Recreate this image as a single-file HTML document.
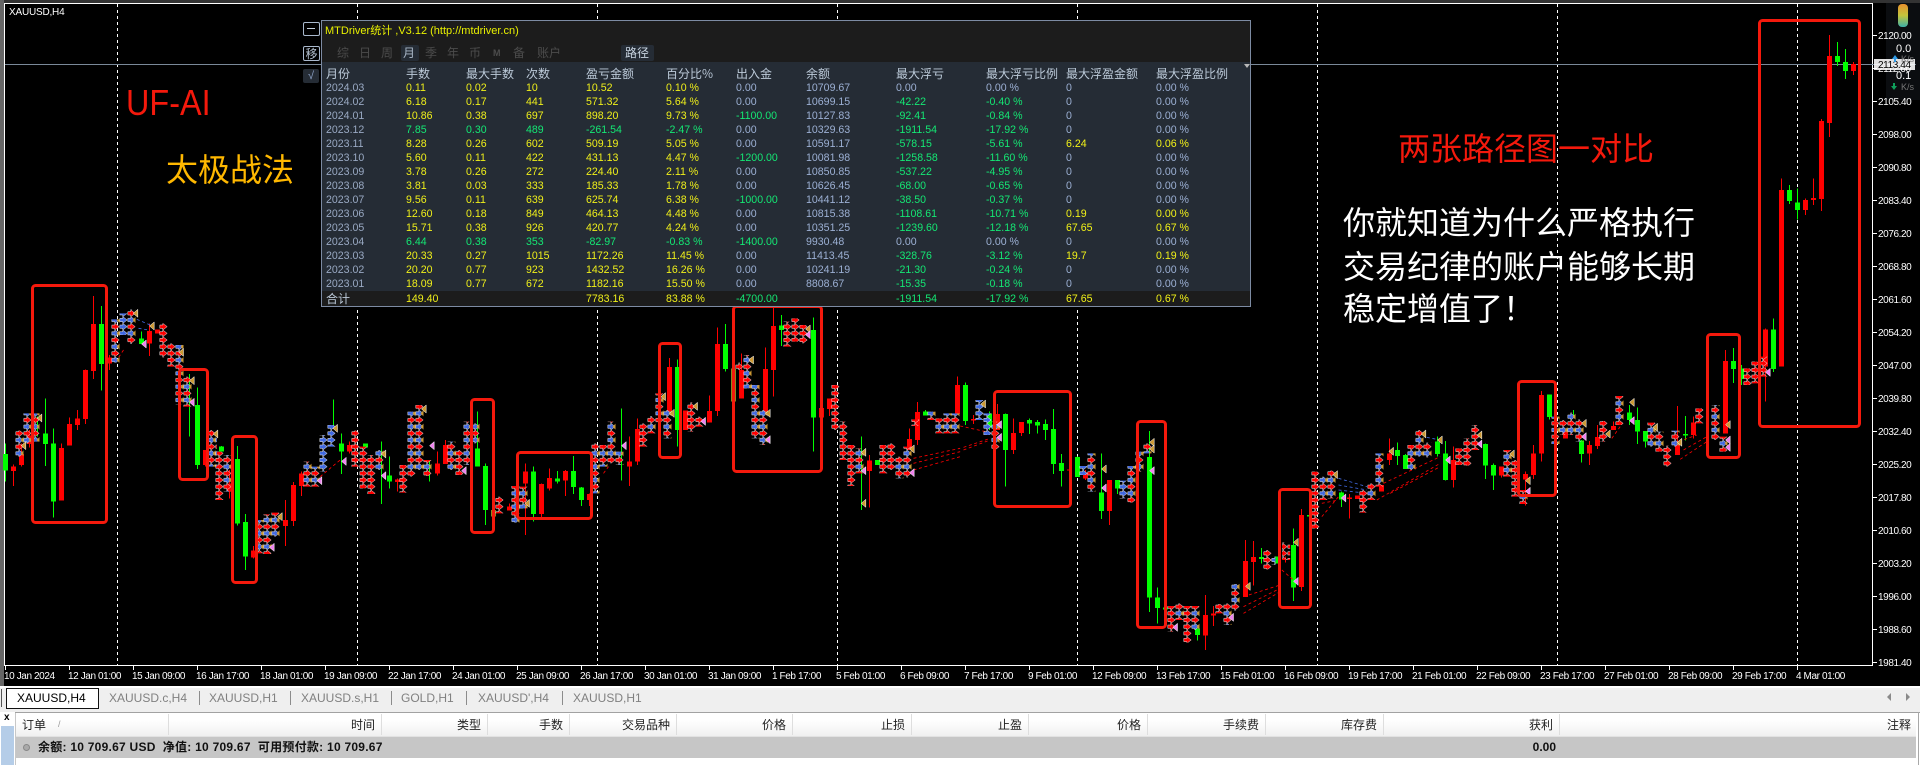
<!DOCTYPE html>
<html><head><meta charset="utf-8"><title>XAUUSD,H4</title>
<style>
html,body{margin:0;padding:0;width:1920px;height:765px;overflow:hidden;background:#000}
body{position:relative;font-family:"Liberation Sans","WenQuanYi Zen Hei","Noto Sans CJK SC",sans-serif}
.a{position:absolute;white-space:nowrap}
svg text{font-family:"Liberation Sans",sans-serif;font-size:10px;letter-spacing:-.4px;fill:#fff}
.w,.b{fill:none;shape-rendering:crispEdges}
.w{stroke-width:3}.b{stroke-width:15}
.r{stroke:#f00}.g{stroke:#0f0}
.s{fill:none;stroke-width:24}
.t1{fill:#cd9933;stroke:#fff;stroke-width:1.5}
.t2{fill:#ee82ee;stroke:#fff;stroke-width:1.5}
.d{fill:none;stroke-width:2.5;stroke-dasharray:9 8}
#p{position:absolute;left:321px;top:20px;width:928px;height:285px;border:1px solid #7d8ba3;background:#252c35;box-sizing:content-box}
#p .tb{position:absolute;left:0;top:0;width:100%;height:41px;background:#1c1c1c}
#p .ft{position:absolute;left:0;top:270px;width:100%;height:15px;background:#1c1c1c}
.h{position:absolute;top:47px;transform:translateY(-14px);font:12px/14px "WenQuanYi Zen Hei","Noto Sans CJK SC",sans-serif;color:#4c4c4c}
table{position:absolute;left:326px;top:67px;border-collapse:collapse;table-layout:fixed;width:920px;font:10.6px/14px "Liberation Sans",sans-serif;color:#9cb0d4}
td,th{padding:0;height:14px;white-space:nowrap;text-align:left;font-weight:normal}
th{font:12px/14px "WenQuanYi Zen Hei","Noto Sans CJK SC",sans-serif;color:#bccad9}
tr td:nth-child(n+2):nth-child(-n+6){color:#efef1a}
tr.gr td:nth-child(n+2):nth-child(-n+6){color:#14e874}
tr td:nth-child(1){color:#99a9c3}
tr td:nth-child(9),tr td:nth-child(10),td.gn{color:#14e874}
td.ne,tr td.ne{color:#9cb0d4}
td.ye,tr td.ye{color:#f2f218}
tr.tot td{height:16px}
tr.tot td:nth-child(1){font:12px/14px "WenQuanYi Zen Hei","Noto Sans CJK SC",sans-serif;color:#bccad9}
.big{font-family:"Noto Sans CJK SC",sans-serif;font-size:32px;line-height:32px}
.hd{position:absolute;top:713px;height:23px;white-space:nowrap;font:12px/23px "WenQuanYi Zen Hei","Noto Sans CJK SC",sans-serif;color:#222;transform:translateX(-100%)}
.sep{position:absolute;top:714px;height:21px;width:1px;background:#dedede}
.tab{position:absolute;top:690px;font:12px/17px "Liberation Sans",sans-serif;color:#808080}
.tsep{position:absolute;top:691px;width:1px;height:14px;background:#8c8c8c}
</style></head><body>

<svg class="a" style="left:0;top:0" width="1920" height="690" viewBox="0 0 1920 690">
<defs>
<pattern id="pr" patternUnits="userSpaceOnUse" x="22" y="0" width="24" height="20"><path d="M1 5H10V0L23 10 10 20V15H1Z" fill="#f00" stroke="#fff" stroke-width="1.4"/></pattern>
<pattern id="pb" patternUnits="userSpaceOnUse" x="22" y="0" width="24" height="20"><path d="M1 5H10V0L23 10 10 20V15H1Z" fill="#4169e1" stroke="#fff" stroke-width="1.4"/></pattern>
<pattern id="pm" patternUnits="userSpaceOnUse" x="22" y="0" width="24" height="40"><path d="M1 5H10V0L23 10 10 20V15H1Z" fill="#f00" stroke="#fff" stroke-width="1.4"/><path d="M1 25H10V20L23 30 10 40V35H1Z" fill="#4169e1" stroke="#fff" stroke-width="1.4"/><path d="M24 21L15 30 24 39Z" fill="#cd9933"/></pattern>
<linearGradient id="gp" x1="0" y1="0" x2="0" y2="1"><stop offset="0" stop-color="#e8902c"/><stop offset=".5" stop-color="#c4c43c"/><stop offset="1" stop-color="#3cb0a8"/></linearGradient>
</defs>
<rect width="1920" height="690" fill="#000"/>
<rect x="0" y="0" width="1920" height="3" fill="#333"/>
<rect x="0" y="0" width="4" height="690" fill="#666"/>
<rect x="1886" y="3" width="34" height="97" fill="#0b0d10"/>
<rect x="1898" y="4" width="10" height="23" rx="4" fill="url(#gp)"/>
<path d="M4.5 3.5H1872.5V665.5H4.5Z" fill="none" stroke="#fff" stroke-width="1" shape-rendering="crispEdges"/>
<path d="M117.5 4V665M357.5 4V665M597.5 4V665M837.5 4V665M1077.5 4V665M1317.5 4V665M1557.5 4V665M1797.5 4V665" stroke="#fff" stroke-dasharray="3 3" fill="none" shape-rendering="crispEdges"/>
<path d="M5 64.5H1916" stroke="#7a8999" fill="none" shape-rendering="crispEdges"/>

<g transform="translate(.17,270) scale(.33333)">
<path class="w r" d="M40 583V648M64 520V590M88 480V532M184 520V692M208 442V527M232 420V480M256 298V462M280 78V327M328 255V300M448 160V258M616 540V590M688 600V685M760 828V866M856 690V828M880 636V768M904 605V678M1048 515V550M1192 625V665M1312 545V617M1336 510V582"/>
<path class="b r" d="M40 590V603M64 552V585M88 497V522M184 534V692M208 462V527M232 445V465M256 300V447M280 162V303M328 262V280M448 183V220M472 178V190M616 540V585M688 640V665M760 842V862M856 750V768M880 645V753M904 610V648M1048 525V545M1192 628V636M1312 580V610M1336 525V582"/>
<path class="w g" d="M16 520V635M112 440V500M136 385V588M160 475V743M304 108V362M424 185V222M568 312V500M592 352V597M664 528V545M712 528V767M736 732V900M1000 388V470M1024 490V612M1144 515V702M1168 560V655M1288 570V635M1432 425V590"/>
<path class="b g" d="M16 552V602M136 490V522M160 520V695M304 162V282M424 205V222M592 405V585M664 530V545M712 567V760M736 756V860M1024 520V545M1096 520V532M1168 616V635M1432 535V590"/>
<path class="d" stroke="#f00" d="M960 620L1020 570M370 240L350 270"/>
<path class="d" stroke="#4169e1" d="M410 148L450 165M415 175L445 180"/>
<path class="s" stroke="url(#pr)" d="M490 160V262M514 220V290M658 545V690M1066 482V590M1090 530V655M1114 555V672M1210 585V668M1378 540V615"/>
<path class="s" stroke="url(#pm)" d="M58 482V560M82 430V520M106 430V515M346 148V278M394 118V222M538 225V405M562 320V410M638 480V590M682 555V665M784 750V850M802 733V852M826 728V800M922 575V650M946 590V650M1234 425V620M1258 405V600M1282 570V618M1354 515V600M1402 455V585M1426 460V520M1138 540V600"/>
<path class="s" stroke="url(#pb)" d="M370 130V195M970 495V605M994 465V530"/>
<path class="t1" d="M125 432l-14 12 14 12zM77 515l-14 12 14 12zM413 118l-14 12 14 12zM462 156l-14 12 14 12zM582 320l-14 12 14 12zM550 235l-14 12 14 12zM653 480l-14 12 14 12zM846 728l-14 12 14 12zM1012 463l-14 12 14 12zM1157 540l-14 12 14 12zM1278 405l-14 12 14 12z"/>
<path class="t2" d="M438 210l-14 12 14 12zM582 385l-14 12 14 12zM822 820l-14 12 14 12zM965 620l-14 12 14 12zM1038 562l-14 12 14 12zM1157 605l-14 12 14 12zM1302 515l-14 12 14 12zM1398 590l-14 12 14 12z"/>
</g>

<g transform="translate(480.17,270) scale(.33333)">
<path class="w r" d="M88 700V722M136 580V795M184 640V742M208 595V662M256 600V678M328 670V708M448 500V648M472 445V585M568 264V430M616 422V480M688 376V458M712 172V438M784 250V385M856 232V430M880 112V380M1048 385V438M1168 555V713M1288 475V540M1312 396V525M1432 320V432"/>
<path class="b r" d="M88 710V722M136 605V640M184 642V732M208 624V656M256 603V632M328 672V690M448 574V590M472 477V575M568 291V425M616 422V480M688 423V458M712 222V423M784 300V385M856 297V430M880 168V300M1024 414V443M1048 385V417M1168 571V603M1288 507V540M1312 426V510M1432 345V432"/>
<path class="w g" d="M16 580V765M160 590V755M232 603V640M280 558V672M304 651V708M424 415V632M592 268V530M736 162V305M904 135V228M1000 142V545M1144 500V720M1192 570V585M1336 420V437"/>
<path class="b g" d="M16 588V720M160 604V732M232 625V634M280 603V651M304 652V690M592 291V480M736 222V297M904 167V180M1000 180V443M1192 570V585M1336 425V437"/>
<path class="b" stroke="#8a8a20" d="M40 720V740M760 295V395"/>
<path class="d" stroke="#f00" d="M1300 565L1440 535M1300 580L1440 545M1300 600L1440 560M370 610L385 590"/>
<path class="s" stroke="url(#pr)" d="M58 680V730M490 460V530M634 397V485M658 440V470M778 278V300M922 155V230M946 145V215M970 165V220M1066 345V480M1090 455V570M1114 525V648M1210 525V610M1234 520V600M1306 448V468"/>
<path class="s" stroke="url(#pm)" d="M106 648V758M130 650V715M346 520V670M370 525V590M394 455V580M418 545V585M514 438V490M538 370V460M562 420V505M802 255V355M826 345V505M850 420V525M1138 535V610M1258 560V625M1282 530V622M1354 425V450M1378 445V490M1402 430V490M1426 430V490"/>
<path class="t1" d="M148 688l-14 12 14 12zM556 368l-14 12 14 12zM582 418l-14 12 14 12zM652 397l-14 12 14 12zM870 418l-14 12 14 12zM820 258l-14 12 14 12zM990 165l-14 12 14 12zM1157 535l-14 12 14 12zM1302 525l-14 12 14 12zM1157 688l-14 12 14 12z"/>
<path class="t2" d="M438 515l-14 12 14 12zM676 442l-14 12 14 12zM870 497l-14 12 14 12zM990 182l-14 12 14 12zM1157 590l-14 12 14 12zM1302 596l-14 12 14 12z"/>
</g>

<g transform="translate(960.17,350) scale(.33333)">
<path class="w r" d="M40 195V222M112 162V240M160 205V312M184 216V258M328 358V362M376 360V390M448 390V525M736 735V900M760 768V828M856 570V741M880 573V706M976 620V638M1024 477V723M1168 432V505M1192 437V447M1288 265V345M1264 405V425"/>
<path class="b r" d="M40 207V212M112 192V240M160 249V300M184 216V249M328 358V362M376 368V385M448 390V483M736 795V857M760 790V797M856 633V741M880 621V636M1024 495V711M1168 442V447M1192 437V447M1288 310V330M1264 405V425"/>
<path class="w g" d="M16 97V225M88 185V240M136 190V410M208 205V252M232 210V250M256 208V270M280 177V372M304 312V410M352 320V381M424 310V507M472 390V432M568 243V786M592 712V820M712 835V872M904 594V640M1000 535V753M1144 425V471M1312 277V345M1336 312V357M1432 260V320"/>
<path class="b g" d="M16 105V213M88 190V232M136 192V300M208 210V220M232 216V226M256 222V240M280 237V342M304 339V363M352 321V381M424 427V483M472 390V415M568 321V743M592 742V774M616 772V778M712 835V855M904 621V627M952 620V640M1000 585V712M1048 495V500M1144 427V448M1312 300V318M1336 315V357M1432 275V312"/>
<path class="d" stroke="#f00" d="M0 228L100 250M10 300L90 270M10 292L90 265M850 740L960 705M850 770L960 715M850 790L960 725M1085 500L1135 440M1085 460L1135 450M1250 450L1440 340M1270 400L1440 320M1290 430L1440 350M965 660L1000 690"/>
<path class="d" stroke="#4169e1" d="M1135 385L1220 410M1135 405L1220 420M1135 420L1220 430M1400 262L1440 270"/>
<path class="s" stroke="url(#pb)" d="M58 150V210M82 190V255M370 348V375M490 392V445M934 620V645"/>
<path class="s" stroke="url(#pr)" d="M634 768V845M682 768V878M778 762V790M922 600V658M978 577V630M1066 365V535M1210 420V488"/>
<path class="s" stroke="url(#pm)" d="M106 215V298M394 310V425M514 348V458M538 305V365M562 280V310M658 760V810M706 768V840M802 760V825M826 702V782M1090 380V450M1114 362V445M1234 400V450M1258 310V410M1354 285V360M1378 240V320M1402 278V322"/>
<path class="t1" d="M76 150l-14 12 14 12zM582 265l-14 12 14 12zM870 697l-14 12 14 12zM1014 565l-14 12 14 12zM438 345l-14 12 14 12zM1132 362l-14 12 14 12zM1300 292l-14 12 14 12zM1397 240l-14 12 14 12zM582 285l-14 12 14 12z"/>
<path class="t2" d="M124 212l-14 12 14 12zM124 250l-14 12 14 12zM438 402l-14 12 14 12zM582 350l-14 12 14 12zM1014 682l-14 12 14 12zM1157 432l-14 12 14 12zM820 790l-14 12 14 12zM652 820l-14 12 14 12z"/>
</g>

<g transform="translate(1440.17,300) scale(.33333)">
<path class="w r" d="M40 440V563M184 500V533M256 515V617M280 435V537M304 273V485M376 395V415M448 423V495M472 375V447M520 365V390M712 318V465M760 350V415M856 150V400M976 85V305"/>
<path class="b r" d="M40 480V540M184 500V527M256 522V538M280 460V525M304 285V461M376 395V415M448 435V461M472 411V438M520 378V390M712 430V465M760 367V405M856 183V400M976 88V200M1024 0V200"/>
<path class="w g" d="M16 423V541M136 430V537M160 490V570M328 283V358M400 330V350M424 420V488M568 315V375M592 322V432M616 393V442M736 348V422M880 144V249M904 195V255M1000 55V216"/>
<path class="b g" d="M16 460V540M136 432V497M160 495V527M328 284V351M424 422V462M568 337V360M592 360V395M616 393V425M736 402V407M880 183V207M904 205V237M1000 88V207"/>
<path class="d" stroke="#f00" d="M720 478L800 425M730 450L800 410M700 430L770 405M515 415L540 380"/>
<path class="s" stroke="url(#pr)" d="M58 445V495M82 415V497M106 375V450M226 480V590M490 363V425M682 437V500M778 325V370M922 205V255M946 185V250M970 170V230"/>
<path class="s" stroke="url(#pm)" d="M202 450V530M250 570V612M346 350V432M370 360V405M394 338V405M418 358V425M538 288V375M634 368V440M658 395V455M706 392V440M826 315V420M850 410V455"/>
<path class="t1" d="M6 408l-14 12 14 12zM222 450l-14 12 14 12zM270 530l-14 12 14 12zM125 393l-14 12 14 12zM438 358l-14 12 14 12zM582 295l-14 12 14 12zM652 370l-14 12 14 12zM725 415l-14 12 14 12zM870 362l-14 12 14 12zM510 390l-14 12 14 12z"/>
<path class="t2" d="M30 468l-14 12 14 12zM125 420l-14 12 14 12zM270 562l-14 12 14 12zM438 398l-14 12 14 12zM582 350l-14 12 14 12zM870 408l-14 12 14 12zM870 430l-14 12 14 12zM990 205l-14 12 14 12z"/>
</g>

<g transform="translate(1700.17,0) scale(.33333)">
<path class="w r" d="M244 535V900M316 595V645M340 535V615M364 357V633M388 105V411M460 186V225"/>
<path class="b r" d="M244 570V900M316 600V630M340 594V600M364 363V597M388 168V369M460 192V213"/>
<path class="w g" d="M268 555V612M292 565V658M412 126V198M436 147V237"/>
<path class="b g" d="M268 570V603M292 608V630M412 168V186M436 186V213"/>
</g>

<g fill="none" stroke="#f4190c" stroke-width="3" stroke-linejoin="round">
<rect x="32.5" y="285.5" width="74" height="237" rx="3"/>
<rect x="179.5" y="369.5" width="28" height="110" rx="3"/>
<rect x="232.5" y="436.5" width="24" height="146" rx="3"/>
<rect x="471.5" y="399.5" width="22" height="133" rx="3"/>
<rect x="517.5" y="452.5" width="74" height="66" rx="3"/>
<rect x="659.5" y="343.5" width="21" height="114" rx="3"/>
<rect x="733.5" y="306.5" width="88" height="165" rx="3"/>
<rect x="994.5" y="391.5" width="76" height="115" rx="3"/>
<rect x="1137.5" y="421.5" width="28" height="206" rx="3"/>
<rect x="1279.5" y="489.5" width="31" height="118" rx="3"/>
<rect x="1518.5" y="381.5" width="37" height="114" rx="3"/>
<rect x="1707.5" y="334.5" width="32" height="123" rx="3"/>
<rect x="1759.5" y="20.5" width="100" height="406" rx="3"/>
</g>

<g stroke="#fff" shape-rendering="crispEdges" fill="none">
<path d="M1873 35.5h4M1873 68.5h4M1873 101.5h4M1873 134.5h4M1873 167.5h4M1873 200.5h4M1873 233.5h4M1873 266.5h4M1873 299.5h4M1873 332.5h4M1873 365.5h4M1873 398.5h4M1873 431.5h4M1873 464.5h4M1873 497.5h4M1873 530.5h4M1873 563.5h4M1873 596.5h4M1873 629.5h4M1873 662.5h4"/>
<path d="M5.5 665v5M69.5 665v5M133.5 665v5M197.5 665v5M261.5 665v5M325.5 665v5M389.5 665v5M453.5 665v5M517.5 665v5M581.5 665v5M645.5 665v5M709.5 665v5M773.5 665v5M837.5 665v5M901.5 665v5M965.5 665v5M1029.5 665v5M1093.5 665v5M1157.5 665v5M1221.5 665v5M1285.5 665v5M1349.5 665v5M1413.5 665v5M1477.5 665v5M1541.5 665v5M1605.5 665v5M1669.5 665v5M1733.5 665v5M1797.5 665v5"/>
</g>

<g>
<text x="1878" y="39">2120.00</text><text x="1878" y="72">2112.60</text><text x="1878" y="105">2105.40</text><text x="1878" y="138">2098.00</text><text x="1878" y="171">2090.80</text><text x="1878" y="204">2083.40</text><text x="1878" y="237">2076.20</text><text x="1878" y="270">2068.80</text><text x="1878" y="303">2061.60</text><text x="1878" y="336">2054.20</text><text x="1878" y="369">2047.00</text><text x="1878" y="402">2039.80</text><text x="1878" y="435">2032.40</text><text x="1878" y="468">2025.20</text><text x="1878" y="501">2017.80</text><text x="1878" y="534">2010.60</text><text x="1878" y="567">2003.20</text><text x="1878" y="600">1996.00</text><text x="1878" y="633">1988.60</text><text x="1878" y="666">1981.40</text>
<text x="4" y="679">10 Jan 2024</text><text x="68" y="679">12 Jan 01:00</text><text x="132" y="679">15 Jan 09:00</text><text x="196" y="679">16 Jan 17:00</text><text x="260" y="679">18 Jan 01:00</text><text x="324" y="679">19 Jan 09:00</text><text x="388" y="679">22 Jan 17:00</text><text x="452" y="679">24 Jan 01:00</text><text x="516" y="679">25 Jan 09:00</text><text x="580" y="679">26 Jan 17:00</text><text x="644" y="679">30 Jan 01:00</text><text x="708" y="679">31 Jan 09:00</text><text x="772" y="679">1 Feb 17:00</text><text x="836" y="679">5 Feb 01:00</text><text x="900" y="679">6 Feb 09:00</text><text x="964" y="679">7 Feb 17:00</text><text x="1028" y="679">9 Feb 01:00</text><text x="1092" y="679">12 Feb 09:00</text><text x="1156" y="679">13 Feb 17:00</text><text x="1220" y="679">15 Feb 01:00</text><text x="1284" y="679">16 Feb 09:00</text><text x="1348" y="679">19 Feb 17:00</text><text x="1412" y="679">21 Feb 01:00</text><text x="1476" y="679">22 Feb 09:00</text><text x="1540" y="679">23 Feb 17:00</text><text x="1604" y="679">27 Feb 01:00</text><text x="1668" y="679">28 Feb 09:00</text><text x="1732" y="679">29 Feb 17:00</text><text x="1796" y="679">4 Mar 01:00</text>
<text x="9" y="15" style="letter-spacing:-.2px">XAUUSD,H4</text>
</g>

<rect x="1874" y="59" width="41" height="11" fill="#fff" fill-opacity=".88"/>
<text x="1878" y="68" style="fill:#000">2113.44</text>
<text x="1896" y="52" style="font-size:11px;letter-spacing:0">0.0</text>
<text x="1896" y="79" style="font-size:11px;letter-spacing:0">0.1</text>
<text x="1901" y="62" style="fill:#777;font-size:9px;letter-spacing:0">K/s</text>
<text x="1901" y="90" style="fill:#777;font-size:9px;letter-spacing:0">K/s</text>
<path d="M1895 55l3 4h-2v3h-2v-3h-2z" fill="#2f9be8"/>
<path d="M1894 90l3-4h-2v-3h-2v3h-2z" fill="#0fa05c"/>
</svg>

<div class="a" style="left:303px;top:22px;width:15px;height:12px;border:1px solid #a9b8cc;border-radius:2px"></div>
<div class="a" style="left:307px;top:28px;width:8px;height:1px;background:#c5d0de"></div>
<div class="a" style="left:303px;top:46px;width:15px;height:13px;border:1px solid #a9b8cc;border-radius:2px;font:12px/13px 'WenQuanYi Zen Hei','Noto Sans CJK SC',sans-serif;color:#b6c3d2;text-align:center">移</div>
<div class="a" style="left:303px;top:69px;width:16px;height:14px;background:#252c35;border-radius:2px;font:11px/14px 'Liberation Sans',sans-serif;color:#8ea3c8;text-align:center">√</div>

<div id="p"><div class="tb"></div><div class="ft"></div></div>
<div class="a" style="left:325px;top:24px;font:11px/14px 'Liberation Sans','WenQuanYi Zen Hei',sans-serif;color:#e8f000">MTDriver统计 ,V3.12 (http://mtdriver.cn)</div>
<div class="a" style="left:401px;top:45px;width:18px;height:16px;background:#252c35;border-radius:2px"></div>
<div class="a" style="left:621px;top:45px;width:33px;height:16px;background:#252c35;border-radius:2px"></div>
<div class="h" style="left:337px;top:60px">综</div><div class="h" style="left:359px;top:60px">日</div><div class="h" style="left:381px;top:60px">周</div><div class="h" style="left:403px;top:60px;color:#aab8c8">月</div><div class="h" style="left:425px;top:60px">季</div><div class="h" style="left:447px;top:60px">年</div><div class="h" style="left:469px;top:60px">币</div><div class="h" style="left:493px;top:60px;font:bold 9px/14px 'Liberation Sans',sans-serif">M</div><div class="h" style="left:513px;top:60px">备</div><div class="h" style="left:537px;top:60px">账户</div><div class="h" style="left:625px;top:60px;color:#c7d3e0">路径</div>
<div class="a" style="left:1244px;top:64px;width:0;height:0;border-left:3px solid transparent;border-right:3px solid transparent;border-top:4px solid #b8b8b8"></div>

<table>
<colgroup><col style="width:80px"><col style="width:60px"><col style="width:60px"><col style="width:60px"><col style="width:80px"><col style="width:70px"><col style="width:70px"><col style="width:90px"><col style="width:90px"><col style="width:80px"><col style="width:90px"><col style="width:90px"></colgroup>
<tr><th>月份</th><th>手数</th><th>最大手数</th><th>次数</th><th>盈亏金额</th><th>百分比%</th><th>出入金</th><th>余额</th><th>最大浮亏</th><th>最大浮亏比例</th><th>最大浮盈金额</th><th>最大浮盈比例</th></tr>
<tr><td>2024.03</td><td>0.11</td><td>0.02</td><td>10</td><td>10.52</td><td>0.10 %</td><td>0.00</td><td>10709.67</td><td class="ne">0.00</td><td class="ne">0.00 %</td><td>0</td><td>0.00 %</td></tr>
<tr><td>2024.02</td><td>6.18</td><td>0.17</td><td>441</td><td>571.32</td><td>5.64 %</td><td>0.00</td><td>10699.15</td><td>-42.22</td><td>-0.40 %</td><td>0</td><td>0.00 %</td></tr>
<tr><td>2024.01</td><td>10.86</td><td>0.38</td><td>697</td><td>898.20</td><td>9.73 %</td><td class="gn">-1100.00</td><td>10127.83</td><td>-92.41</td><td>-0.84 %</td><td>0</td><td>0.00 %</td></tr>
<tr class="gr"><td>2023.12</td><td>7.85</td><td>0.30</td><td>489</td><td>-261.54</td><td>-2.47 %</td><td>0.00</td><td>10329.63</td><td>-1911.54</td><td>-17.92 %</td><td>0</td><td>0.00 %</td></tr>
<tr><td>2023.11</td><td>8.28</td><td>0.26</td><td>602</td><td>509.19</td><td>5.05 %</td><td>0.00</td><td>10591.17</td><td>-578.15</td><td>-5.61 %</td><td class="ye">6.24</td><td class="ye">0.06 %</td></tr>
<tr><td>2023.10</td><td>5.60</td><td>0.11</td><td>422</td><td>431.13</td><td>4.47 %</td><td class="gn">-1200.00</td><td>10081.98</td><td>-1258.58</td><td>-11.60 %</td><td>0</td><td>0.00 %</td></tr>
<tr><td>2023.09</td><td>3.78</td><td>0.26</td><td>272</td><td>224.40</td><td>2.11 %</td><td>0.00</td><td>10850.85</td><td>-537.22</td><td>-4.95 %</td><td>0</td><td>0.00 %</td></tr>
<tr><td>2023.08</td><td>3.81</td><td>0.03</td><td>333</td><td>185.33</td><td>1.78 %</td><td>0.00</td><td>10626.45</td><td>-68.00</td><td>-0.65 %</td><td>0</td><td>0.00 %</td></tr>
<tr><td>2023.07</td><td>9.56</td><td>0.11</td><td>639</td><td>625.74</td><td>6.38 %</td><td class="gn">-1000.00</td><td>10441.12</td><td>-38.50</td><td>-0.37 %</td><td>0</td><td>0.00 %</td></tr>
<tr><td>2023.06</td><td>12.60</td><td>0.18</td><td>849</td><td>464.13</td><td>4.48 %</td><td>0.00</td><td>10815.38</td><td>-1108.61</td><td>-10.71 %</td><td class="ye">0.19</td><td class="ye">0.00 %</td></tr>
<tr><td>2023.05</td><td>15.71</td><td>0.38</td><td>926</td><td>420.77</td><td>4.24 %</td><td>0.00</td><td>10351.25</td><td>-1239.60</td><td>-12.18 %</td><td class="ye">67.65</td><td class="ye">0.67 %</td></tr>
<tr class="gr"><td>2023.04</td><td>6.44</td><td>0.38</td><td>353</td><td>-82.97</td><td>-0.83 %</td><td class="gn">-1400.00</td><td>9930.48</td><td class="ne">0.00</td><td class="ne">0.00 %</td><td>0</td><td>0.00 %</td></tr>
<tr><td>2023.03</td><td>20.33</td><td>0.27</td><td>1015</td><td>1172.26</td><td>11.45 %</td><td>0.00</td><td>11413.45</td><td>-328.76</td><td>-3.12 %</td><td class="ye">19.7</td><td class="ye">0.19 %</td></tr>
<tr><td>2023.02</td><td>20.20</td><td>0.77</td><td>923</td><td>1432.52</td><td>16.26 %</td><td>0.00</td><td>10241.19</td><td>-21.30</td><td>-0.24 %</td><td>0</td><td>0.00 %</td></tr>
<tr><td>2023.01</td><td>18.09</td><td>0.77</td><td>672</td><td>1182.16</td><td>15.50 %</td><td>0.00</td><td>8808.67</td><td>-15.35</td><td>-0.18 %</td><td>0</td><td>0.00 %</td></tr>
<tr class="tot"><td>合计</td><td>149.40</td><td></td><td></td><td>7783.16</td><td>83.88 %</td><td class="gn">-4700.00</td><td></td><td>-1911.54</td><td>-17.92 %</td><td class="ye">67.65</td><td class="ye">0.67 %</td></tr>
</table>

<div class="a" style="left:126px;top:85px;font:36px/36px 'Liberation Sans',sans-serif;color:#f4190c;transform:scaleX(.9);transform-origin:0 0">UF-AI</div>
<div class="a big" style="left:166px;top:152px;color:#ffb800">太极战法</div>
<div class="a big" style="left:1398px;top:131px;color:#f4190c">两张路径图一对比</div>
<div class="a big" style="left:1343px;top:205px;color:#fff">你就知道为什么严格执行</div>
<div class="a big" style="left:1343px;top:249px;color:#fff">交易纪律的账户能够长期</div>
<div class="a big" style="left:1343px;top:291px;color:#fff">稳定增值了！</div>

<div class="a" style="left:0;top:686px;width:1920px;height:2px;background:#fff"></div>
<div class="a" style="left:0;top:688px;width:1920px;height:24px;background:#efefef"></div>
<div class="a" style="left:1px;top:689px;width:1px;height:18px;background:#555"></div>
<div class="a" style="left:6px;top:688px;width:91px;height:19px;background:#fff;border:1px solid #111;box-sizing:content-box"></div>
<div class="tab" style="left:17px;color:#000">XAUUSD,H4</div>
<div class="tab" style="left:109px">XAUUSD.c,H4</div><div class="tsep" style="left:199px"></div>
<div class="tab" style="left:209px">XAUUSD,H1</div><div class="tsep" style="left:290px"></div>
<div class="tab" style="left:301px">XAUUSD.s,H1</div><div class="tsep" style="left:391px"></div>
<div class="tab" style="left:401px">GOLD,H1</div><div class="tsep" style="left:466px"></div>
<div class="tab" style="left:478px">XAUUSD',H4</div><div class="tsep" style="left:562px"></div>
<div class="tab" style="left:573px">XAUUSD,H1</div>
<div class="a" style="left:1887px;top:693px;border-top:4px solid transparent;border-bottom:4px solid transparent;border-right:4px solid #8a8a8a"></div>
<div class="a" style="left:1906px;top:693px;border-top:4px solid transparent;border-bottom:4px solid transparent;border-left:4px solid #8a8a8a"></div>

<div class="a" style="left:0;top:712px;width:1920px;height:53px;background:#fff"></div>
<div class="a" style="left:15px;top:712px;width:1905px;height:1px;background:#a2a2a2"></div>
<div class="a" style="left:15px;top:713px;width:1px;height:52px;background:#c8c8c8"></div>
<div class="a" style="left:1px;top:726px;width:13px;height:39px;background:#b5cde8"></div>
<div class="a" style="left:4px;top:712px;font:bold 10px/12px 'Liberation Sans',sans-serif;color:#000">x</div>
<div class="a" style="left:16px;top:713px;width:1900px;height:23px;background:linear-gradient(#fff 30%,#f0f0f0)"></div>
<div class="a" style="left:16px;top:736px;width:1900px;height:1px;background:#e2e2e2"></div>
<div class="a" style="left:1918px;top:712px;width:1px;height:53px;background:#a8a8a8"></div>
<div class="a" style="left:22px;top:713px;font:12px/23px 'WenQuanYi Zen Hei','Noto Sans CJK SC',sans-serif;color:#222">订单</div>
<div class="a" style="left:58px;top:713px;font:9px/23px 'Liberation Sans',sans-serif;color:#999">/</div>
<div class="sep" style="left:168px"></div>
<div class="hd" style="left:375px">时间</div><div class="sep" style="left:381px"></div>
<div class="hd" style="left:481px">类型</div><div class="sep" style="left:487px"></div>
<div class="hd" style="left:563px">手数</div><div class="sep" style="left:569px"></div>
<div class="hd" style="left:670px">交易品种</div><div class="sep" style="left:676px"></div>
<div class="hd" style="left:786px">价格</div><div class="sep" style="left:792px"></div>
<div class="hd" style="left:905px">止损</div><div class="sep" style="left:911px"></div>
<div class="hd" style="left:1022px">止盈</div><div class="sep" style="left:1028px"></div>
<div class="hd" style="left:1141px">价格</div><div class="sep" style="left:1147px"></div>
<div class="hd" style="left:1259px">手续费</div><div class="sep" style="left:1265px"></div>
<div class="hd" style="left:1377px">库存费</div><div class="sep" style="left:1383px"></div>
<div class="hd" style="left:1553px">获利</div><div class="sep" style="left:1559px"></div>
<div class="hd" style="left:1911px">注释</div>
<div class="a" style="left:16px;top:737px;width:1900px;height:21px;background:#c6c6c6"></div>
<div class="a" style="left:23px;top:744px;width:7px;height:7px;border-radius:50%;background:#aaa;border:1px solid #888;box-sizing:border-box"></div>
<div class="a" style="left:38px;top:737px;font:bold 12px/21px 'Liberation Sans','Noto Sans CJK SC',sans-serif;letter-spacing:.25px;color:#111;white-space:pre">余额: 10 709.67 USD  净值: 10 709.67  可用预付款: 10 709.67</div>
<div class="a" style="left:1532px;top:737px;width:24px;text-align:right;font:bold 12px/21px 'Liberation Sans',sans-serif;color:#111">0.00</div>
</body></html>
